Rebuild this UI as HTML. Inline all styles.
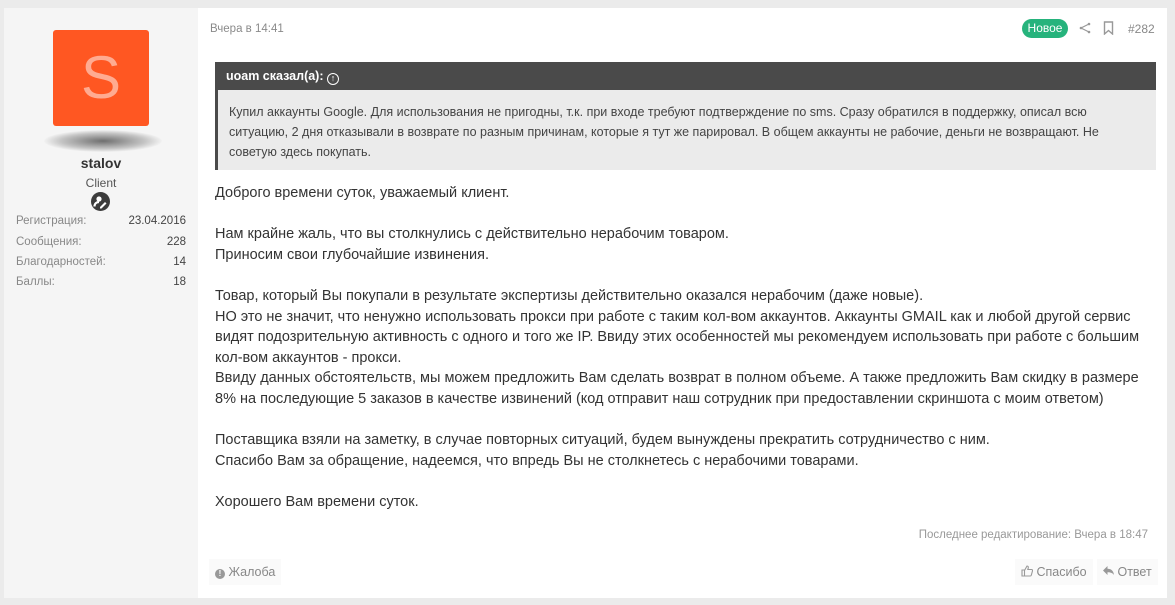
<!DOCTYPE html>
<html><head><meta charset="utf-8"><style>
*{box-sizing:border-box;margin:0;padding:0}
body{width:1175px;height:605px;background:#ebebeb;font-family:"Liberation Sans",sans-serif;position:relative;overflow:hidden}
.card{position:absolute;left:4px;top:8px;width:1163px;height:590px;background:#fff}
.side{position:absolute;left:0;top:0;width:194px;height:590px;background:#f5f5f5}
.av{position:absolute;left:49px;top:22px;width:96px;height:96px;background:#ff5722;border-radius:3px;color:#ffab91;font-size:60px;text-align:center;line-height:96px}
.shadow{position:absolute;left:40px;top:122px;width:118px;height:22px;border-radius:50%;background:radial-gradient(ellipse at center,rgba(0,0,0,.55) 0%,rgba(0,0,0,.2) 50%,rgba(0,0,0,0) 72%)}
.name{position:absolute;left:0;width:194px;top:147px;text-align:center;font-weight:bold;font-size:14px;color:#333}
.role{position:absolute;left:0;width:194px;top:168px;text-align:center;font-size:12px;color:#555}
.badge{position:absolute;left:87px;top:184px;width:19px;height:19px;border-radius:50%;background:#3c3c3c}
.st{position:absolute;left:12px;width:170px;font-size:11.5px;color:#888;display:flex;justify-content:space-between}
.st b{font-weight:normal;color:#444}
.main{position:absolute;left:194px;top:0;right:0;bottom:0}
.date{position:absolute;left:12px;top:15px;font-size:11.5px;color:#8a8a8a}
.new{position:absolute;left:824px;top:11px;width:46px;height:19px;border-radius:10px;background:#26b37c;color:#fff;font-size:12px;text-align:center;line-height:19px}
.num{position:absolute;left:930px;top:14px;font-size:12px;color:#888}
.quote{position:absolute;left:17px;top:54px;width:941px;height:108px;background:#ebebeb;border-left:3px solid #4a4a4a}
.qh{height:28px;background:#4a4a4a;color:#fff;font-weight:bold;font-size:12.5px;line-height:28px;padding-left:11px;margin-left:-3px}
.qb{padding:12px 10px 0 11px;font-size:12.5px;line-height:20px;color:#444;white-space:nowrap}
.text{position:absolute;left:17px;top:175px;width:950px;font-size:14.5px;line-height:20.6px;color:#333;white-space:nowrap}
.edit{position:absolute;right:19px;top:521px;font-size:11.5px;color:#999}
.btn{position:absolute;top:551px;height:26px;background:#fafafa;font-size:12.5px;color:#888;line-height:26px;padding:0 6px}
</style></head><body>
<div class="card">
<div class="side">
<div class="av">S</div><div class="shadow"></div>
<div class="name">stalov</div>
<div class="role">Client</div>
<div class="badge"><svg width="19" height="19" viewBox="0 0 19 19"><circle cx="8" cy="7" r="2.6" fill="#fff"/><path d="M3.5 14.5c0-3 2-4.5 4.5-4.5" stroke="#fff" stroke-width="2.2" fill="none"/><path d="M9 15l5-5 1.5 1.5-5 5H9z" fill="#fff"/></svg></div>
<div class="st" style="top:207px"><span>Регистрация:</span><b>23.04.2016</b></div>
<div class="st" style="top:228px"><span>Сообщения:</span><b>228</b></div>
<div class="st" style="top:248px"><span>Благодарностей:</span><b>14</b></div>
<div class="st" style="top:268px"><span>Баллы:</span><b>18</b></div>
</div>
<div class="main">
<div class="date">Вчера в 14:41</div>
<div class="new">Новое</div>
<svg style="position:absolute;left:881px;top:14px" width="12" height="12" viewBox="0 0 12 12"><circle cx="10" cy="2" r="1.3" fill="#999"/><circle cx="2" cy="6" r="1.3" fill="#999"/><circle cx="10" cy="10" r="1.3" fill="#999"/><path d="M10 2L2 6l8 4" stroke="#999" stroke-width="1.2" fill="none"/></svg>
<svg style="position:absolute;left:905px;top:13px" width="11" height="14" viewBox="0 0 11 14"><path d="M1.5 1h8v12l-4-3.5-4 3.5z" stroke="#999" stroke-width="1.4" fill="none"/></svg>
<div class="num">#282</div>
<div class="quote"><div class="qh">uoam сказал(а): <span style="display:inline-block;width:12px;height:12px;border:1.5px solid #fff;border-radius:50%;font-size:9px;line-height:9px;text-align:center;vertical-align:-1px">↑</span></div>
<div class="qb">Купил аккаунты Google. Для использования не пригодны, т.к. при входе требуют подтверждение по sms. Сразу обратился в поддержку, описал всю<br>ситуацию, 2 дня отказывали в возврате по разным причинам, которые я тут же парировал. В общем аккаунты не рабочие, деньги не возвращают. Не<br>советую здесь покупать.</div></div>
<div class="text">Доброго времени суток, уважаемый клиент.<br><br>Нам крайне жаль, что вы столкнулись с действительно нерабочим товаром.<br>Приносим свои глубочайшие извинения.<br><br>Товар, который Вы покупали в результате экспертизы действительно оказался нерабочим (даже новые).<br>НО это не значит, что ненужно использовать прокси при работе с таким кол-вом аккаунтов. Аккаунты GMAIL как и любой другой сервис<br>видят подозрительную активность с одного и того же IP. Ввиду этих особенностей мы рекомендуем использовать при работе с большим<br>кол-вом аккаунтов - прокси.<br>Ввиду данных обстоятельств, мы можем предложить Вам сделать возврат в полном объеме. А также предложить Вам скидку в размере<br>8% на последующие 5 заказов в качестве извинений (код отправит наш сотрудник при предоставлении скриншота с моим ответом)<br><br>Поставщика взяли на заметку, в случае повторных ситуаций, будем вынуждены прекратить сотрудничество с ним.<br>Спасибо Вам за обращение, надеемся, что впредь Вы не столкнетесь с нерабочими товарами.<br><br>Хорошего Вам времени суток.</div>
<div class="edit">Последнее редактирование: Вчера в 18:47</div>
<div class="btn" style="left:11px"><span style="display:inline-block;width:10px;height:10px;border-radius:50%;background:#999;color:#fff;font-size:8px;line-height:10px;text-align:center;font-weight:bold;vertical-align:0">!</span> Жалоба</div>
<div class="btn" style="left:817px"><svg width="12" height="12" viewBox="0 0 12 12" style="vertical-align:-1px"><path d="M1 5h2.5v6H1zM3.5 5.5L6 1c1.2 0 1.5 1 1.2 2.2L6.8 4.5H10.5c.8 0 1.2.7 1 1.4l-1.2 4.3c-.2.5-.6.8-1.1.8H3.5" stroke="#999" stroke-width="1.1" fill="none"/></svg> Спасибо</div>
<div class="btn" style="left:899px"><svg width="11" height="10" viewBox="0 0 11 10" style="vertical-align:0"><path d="M0 4.5L4.5 0v2.7C8 2.7 10.5 4.5 11 9 9.5 7 7.5 6.3 4.5 6.3V9z" fill="#999"/></svg> Ответ</div>
</div>
</div>
</body></html>
